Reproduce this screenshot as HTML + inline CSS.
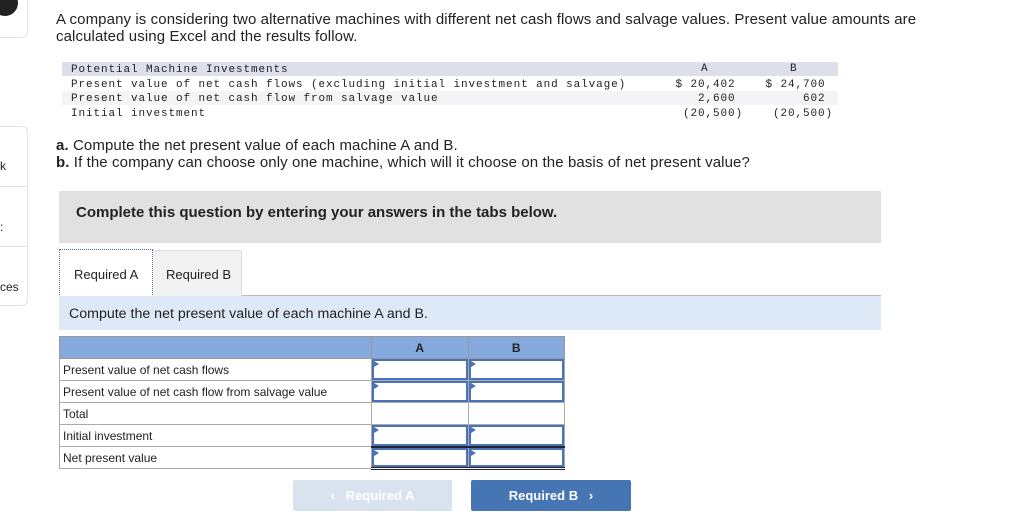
<!DOCTYPE html>
<html><head><style>
*{margin:0;padding:0;box-sizing:border-box}
body{width:1024px;height:530px;background:#fff;font-family:"Liberation Sans",sans-serif;color:#222;position:relative;overflow:hidden}
.a{position:absolute}
.mono{font-family:"Liberation Mono",monospace;font-size:11px;letter-spacing:0.9px;white-space:pre;color:#222}
.side{border:1px solid #e4e4e4;border-radius:6px;border-left:none}
td{font-size:12px;padding:0}
.in{position:relative;height:100%;border:2px solid #4a72b8}
.in:before{content:"";position:absolute;left:0;top:0;border-left:5px solid #4a72b8;border-top:3px solid transparent;border-bottom:3px solid transparent}
</style></head><body>
<div class="a side" style="left:-10px;top:-10px;width:38px;height:48px"></div>
<div class="a" style="left:-8px;top:-10px;width:26px;height:26px;border-radius:50%;background:#222"></div>
<div class="a side" style="left:-10px;top:126px;width:38px;height:180px"></div>
<div class="a" style="left:0;top:186px;width:28px;border-top:1px solid #e4e4e4"></div>
<div class="a" style="left:0;top:246px;width:28px;border-top:1px solid #e4e4e4"></div>
<div class="a" style="left:0;top:159px;font-size:12px">k</div>
<div class="a" style="left:0;top:220px;font-size:12px">:</div>
<div class="a" style="left:0;top:280px;font-size:12px">ces</div>

<div class="a" style="left:56px;top:11px;width:875px;font-size:15px;line-height:17px;letter-spacing:0.1px">A company is considering two alternative machines with different net cash flows and salvage values. Present value amounts are calculated using Excel and the results follow.</div>

<div class="a" style="left:62px;top:62px;width:776px;height:14px;background:#dde0ea"></div>
<div class="a" style="left:62px;top:91px;width:776px;height:14px;background:#f4f4f6"></div>
<div class="a mono" style="left:71px;top:63px;line-height:14.5px">Potential Machine Investments
Present value of net cash flows (excluding initial investment and salvage)
Present value of net cash flow from salvage value
Initial investment</div>
<div class="a mono" style="left:663px;top:63px;width:80px;text-align:right;line-height:14.5px"> 
$ 20,402 
2,600 
(20,500)</div>
<div class="a mono" style="left:753px;top:63px;width:80px;text-align:right;line-height:14.5px"> 
$ 24,700 
602 
(20,500)</div>
<div class="a mono" style="left:701px;top:63px">A</div>
<div class="a mono" style="left:790px;top:63px">B</div>

<div class="a" style="left:56px;top:137px;font-size:15px;line-height:17px;letter-spacing:0.1px"><b>a.</b> Compute the net present value of each machine A and B.<br><b>b.</b> If the company can choose only one machine, which will it choose on the basis of net present value?</div>

<div class="a" style="left:59px;top:191px;width:822px;height:52px;background:#e1e1e1"></div>
<div class="a" style="left:76px;top:204px;font-size:15px;font-weight:bold">Complete this question by entering your answers in the tabs below.</div>

<div class="a" style="left:59px;top:295px;width:822px;border-top:1px solid #bbb"></div>
<div class="a" style="left:152px;top:250px;width:90px;height:46px;background:#f2f2f2;border:1px solid #ddd;border-bottom:none;font-size:13px;padding:16px 0 0 13px">Required B</div>
<div class="a" style="left:59px;top:249px;width:94px;height:48px;background:#fff;border:1px dotted #4a6fb5;font-size:13px;padding:17px 0 0 14px">Required A</div>
<div class="a" style="left:59px;top:296px;width:822px;height:34px;background:#dde9f6;font-size:14.2px;padding:10px 0 0 10px">Compute the net present value of each machine A and B.</div>

<table class="a" style="left:59px;top:336px;width:506px;border-collapse:collapse">
<tr style="height:22px;background:#85a9dd"><td style="width:312px;border:1px solid #999"></td><td style="border:1px solid #999;text-align:center;font-weight:bold">A</td><td style="border:1px solid #999;text-align:center;font-weight:bold">B</td></tr>
<tr style="height:22px"><td style="border:1px solid #aaa;padding-left:3px">Present value of net cash flows</td><td style="border:1px solid #aaa;height:22px"><div class="in"></div></td><td style="border:1px solid #aaa;height:22px"><div class="in"></div></td></tr>
<tr style="height:22px"><td style="border:1px solid #aaa;padding-left:3px">Present value of net cash flow from salvage value</td><td style="border:1px solid #aaa;height:22px"><div class="in"></div></td><td style="border:1px solid #aaa;height:22px"><div class="in"></div></td></tr>
<tr style="height:22px"><td style="border:1px solid #aaa;padding-left:3px">Total</td><td style="border:1px solid #aaa"></td><td style="border:1px solid #aaa"></td></tr>
<tr style="height:22px"><td style="border:1px solid #aaa;padding-left:3px">Initial investment</td><td style="border:1px solid #aaa;height:22px"><div class="in"></div></td><td style="border:1px solid #aaa;height:22px"><div class="in"></div></td></tr>
<tr style="height:22px"><td style="border:1px solid #aaa;padding-left:3px">Net present value</td><td style="border:1px solid #aaa;border-top:2px solid #223;border-bottom:3px double #222;height:22px"><div class="in"></div></td><td style="border:1px solid #aaa;border-top:2px solid #223;border-bottom:3px double #222;height:22px"><div class="in"></div></td></tr>
</table>

<div class="a" style="left:293px;top:480px;width:159px;height:31px;background:#d9e3ef;border-radius:2px;color:#fff;font-size:13px;font-weight:bold;text-align:center;line-height:31px">&lsaquo;&nbsp;&nbsp;&nbsp;Required A</div>
<div class="a" style="left:471px;top:480px;width:160px;height:31px;background:#4575b3;border-radius:2px;color:#fff;font-size:13px;font-weight:bold;text-align:center;line-height:31px">Required B&nbsp;&nbsp;&nbsp;&rsaquo;</div>
</body></html>
